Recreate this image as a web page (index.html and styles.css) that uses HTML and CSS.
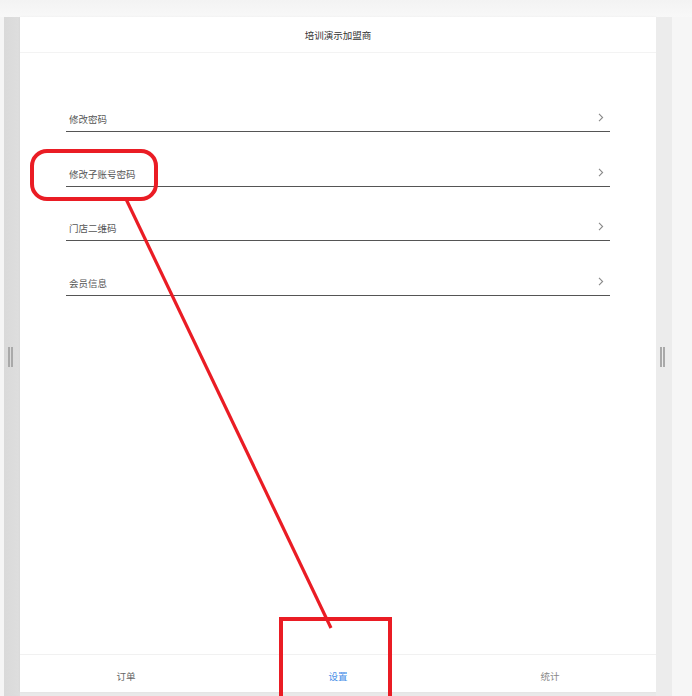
FILE: index.html
```html
<!DOCTYPE html>
<html lang="zh">
<head>
<meta charset="utf-8">
<title>设置</title>
<link rel="stylesheet" href="styles.css">
</head>
<body>
<div class="top-gap"></div>
<div class="frame">
  <div class="edge edge-left"><span class="handle"></span></div>
  <div class="stage">
    <div class="panel">
      <header class="header">培训演示加盟商</header>
      <main class="content">
        <ul class="menu">
          <li class="menu-row"><span>修改密码</span><svg class="chev" width="6" height="9" viewBox="0 0 6 9"><polyline points="1,0.8 4.6,4.5 1,8.2" fill="none" stroke="#8a8a8a" stroke-width="1.1"/></svg></li>
          <li class="menu-row"><span>修改子账号密码</span><svg class="chev" width="6" height="9" viewBox="0 0 6 9"><polyline points="1,0.8 4.6,4.5 1,8.2" fill="none" stroke="#8a8a8a" stroke-width="1.1"/></svg></li>
          <li class="menu-row"><span>门店二维码</span><svg class="chev" width="6" height="9" viewBox="0 0 6 9"><polyline points="1,0.8 4.6,4.5 1,8.2" fill="none" stroke="#8a8a8a" stroke-width="1.1"/></svg></li>
          <li class="menu-row"><span>会员信息</span><svg class="chev" width="6" height="9" viewBox="0 0 6 9"><polyline points="1,0.8 4.6,4.5 1,8.2" fill="none" stroke="#8a8a8a" stroke-width="1.1"/></svg></li>
        </ul>
      </main>
      <nav class="tabbar">
        <div class="tab">订单</div>
        <div class="tab tab-active">设置</div>
        <div class="tab tab-muted">统计</div>
      </nav>
    </div>
  </div>
  <div class="edge edge-right"><span class="handle"></span></div>
  <div class="outer-right"></div>
</div>
<svg class="annot" width="692" height="696" viewBox="0 0 692 696">
  <rect x="32" y="151" width="124" height="48" rx="15" ry="15" fill="none" stroke="#ea1c24" stroke-width="4"/>
  <line x1="126" y1="199" x2="331" y2="628" stroke="#ea1c24" stroke-width="3.2"/>
  <rect x="281" y="619" width="109" height="82" fill="none" stroke="#ea1c24" stroke-width="4"/>
</svg>
</body>
</html>
```
FILE: styles.css
```css
* { box-sizing: border-box; }
html, body {
  margin: 0;
  padding: 0;
}
body {
  width: 692px;
  height: 696px;
  overflow: hidden;
  background: #f6f6f6;
  font-family: "Noto Sans CJK SC", "Noto Sans", sans-serif;
  position: relative;
}
.top-gap {
  height: 17px;
  background: linear-gradient(#f3f3f3, #f8f8f8);
}
.frame {
  display: flex;
  height: 679px;
  padding-left: 4px;
  background: #f5f5f5;
}
.edge {
  width: 16px;
  display: flex;
  align-items: center;
  justify-content: center;
}
.edge-left {
  background: linear-gradient(90deg, #d9d9d9, #dedede);
}
.edge-right {
  background: #ececec;
}
.handle {
  width: 5px;
  height: 20px;
  border-left: 2px solid #a9a9a9;
  border-right: 2px solid #a9a9a9;
  margin-left: -3px;
}
.outer-right {
  flex: 1;
  background: #f6f6f6;
}
.stage {
  width: 636px;
  background: #e9e9e9;
}
.panel {
  height: 675px;
  background: #fff;
  display: flex;
  flex-direction: column;
  box-shadow: 0 0 2px rgba(0,0,0,0.06);
}
.header {
  height: 36px;
  border-bottom: 1px solid #f3f3f3;
  display: flex;
  align-items: center;
  justify-content: center;
  font-size: 9.5px;
  color: #333;
  padding-top: 1px;
}
.content {
  flex: 1;
}
.menu {
  list-style: none;
  margin: 0;
  padding: 25px 46px 0;
}
.menu-row {
  height: 54.4px;
  border-bottom: 1px solid #555;
  display: flex;
  align-items: flex-end;
  justify-content: space-between;
  padding: 0 6px 5px 3px;
  font-size: 9.5px;
  line-height: 13px;
  color: #555;
}
.chev {
  display: block;
  margin-bottom: 4px;
}
.tabbar {
  height: 38px;
  border-top: 1px solid #f1f1f1;
  display: flex;
}
.tab {
  flex: 1;
  display: flex;
  align-items: center;
  justify-content: center;
  font-size: 9.5px;
  color: #666;
  padding-top: 4px;
}
.tab-active { color: #4a90e8; }
.tab-muted { color: #888; }
.annot {
  position: absolute;
  top: 0;
  left: 0;
  pointer-events: none;
}
```
